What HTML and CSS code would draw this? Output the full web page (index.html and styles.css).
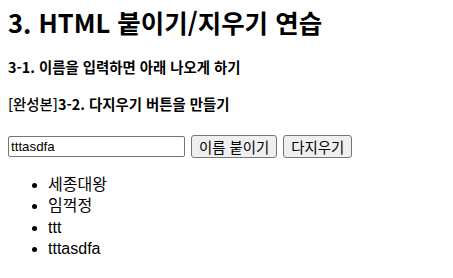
FILE: index.html
```html
<!DOCTYPE html>
<html lang="ko">
<head>
    <meta charset="UTF-8">
    <meta name="viewport" content="width=device-width, initial-scale=1.0">
    <title>HTML 붙이기/지우기 연습</title>
    <link rel="stylesheet" href="styles.css">
</head>
<body>
    <h1>3. HTML 붙이기/지우기 연습</h1>
    <h4>3-1. 이름을 입력하면 아래 나오게 하기</h4>
    <h4><span class="tag">[완성본]</span>3-2. 다지우기 버튼을 만들기</h4>
    <div class="form-row">
        <input type="text" id="nameInput" value="tttasdfa">
        <button>이름 붙이기</button>
        <button>다지우기</button>
    </div>
    <ul id="nameList">
        <li>세종대왕</li>
        <li>임꺽정</li>
        <li>ttt</li>
        <li>tttasdfa</li>
    </ul>
</body>
</html>
```

FILE: styles.css
```css
body {
    font-family: "Liberation Sans", "Noto Sans CJK KR", sans-serif;
    margin: 8px;
    color: #000;
    background: #fff;
}
h1 {
    font-family: "Noto Sans CJK KR", sans-serif;
    font-size: 25.5px;
    line-height: 28px;
    margin: 0 0 22px 0;
}
h4 {
    font-family: "Noto Sans CJK KR", sans-serif;
    font-size: 14.4px;
    line-height: 18px;
    margin: 0 0 19px 0;
}
.tag {
    font-weight: 500;
}
.form-row {
    display: flex;
    align-items: center;
    gap: 6px;
    margin-top: 22px;
}
input[type="text"] {
    width: 171px;
    height: 17px;
    font-size: 13.33px;
    padding: 1px 2px;
    border: 1px solid #767676;
    border-radius: 2px;
    font-family: "Liberation Sans", sans-serif;
}
button {
    font-size: 14.4px;
    font-family: "Noto Sans CJK KR", sans-serif;
    padding: 0 7px;
    height: 23px;
    line-height: 20px;
    border: 1px solid #767676;
    border-radius: 3px;
    background: #efefef;
    color: #000;
}
ul {
    margin: 16px 0 0 0;
    padding-left: 40px;
    font-size: 16px;
    line-height: 21.4px;
}
```
